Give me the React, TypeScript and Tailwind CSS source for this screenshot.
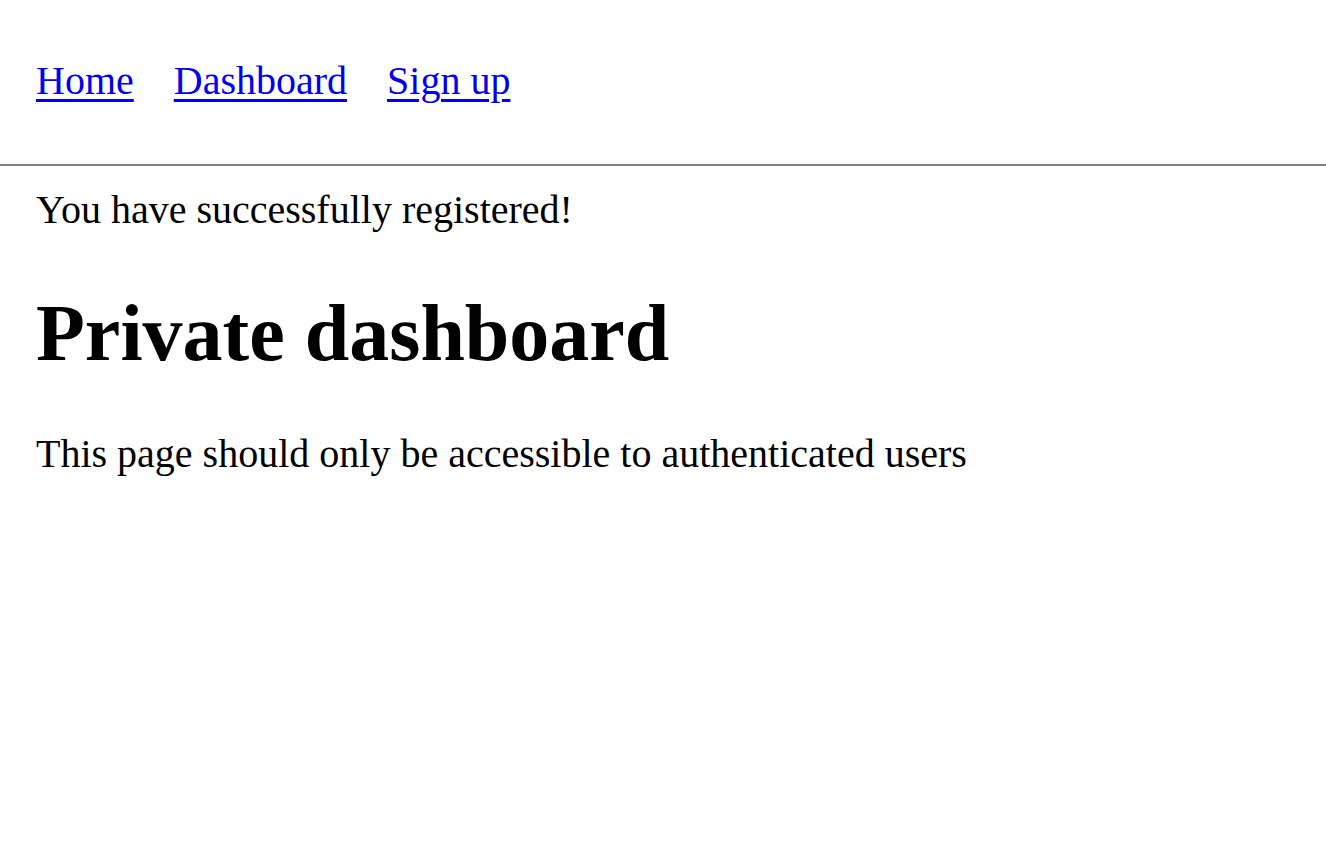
export default function App() {
  return (
    <div className="min-h-[842px] bg-white text-black" style={{ fontFamily: '"Liberation Serif", "Times New Roman", serif' }}>
      <nav className="flex gap-[40px] px-[36px] pt-[59px] pb-[61px] text-[40px] leading-[44px]">
        <a href="#" className="text-[#0000ee] underline decoration-[3px] underline-offset-[5px]">Home</a>
        <a href="#" className="text-[#0000ee] underline decoration-[3px] underline-offset-[5px]">Dashboard</a>
        <a href="#" className="text-[#0000ee] underline decoration-[3px] underline-offset-[5px]">Sign up</a>
      </nav>
      <div className="h-[2px] bg-[#808080]" />
      <div className="px-[36px]">
        <p className="mt-[22px] text-[40px] leading-[44px]">You have successfully registered!</p>
        <h1 className="mt-[57px] text-[80px] font-bold leading-[88px]">Private dashboard</h1>
        <p className="mt-[55px] text-[40px] leading-[44px]">This page should only be accessible to authenticated users</p>
      </div>
    </div>
  );
}
